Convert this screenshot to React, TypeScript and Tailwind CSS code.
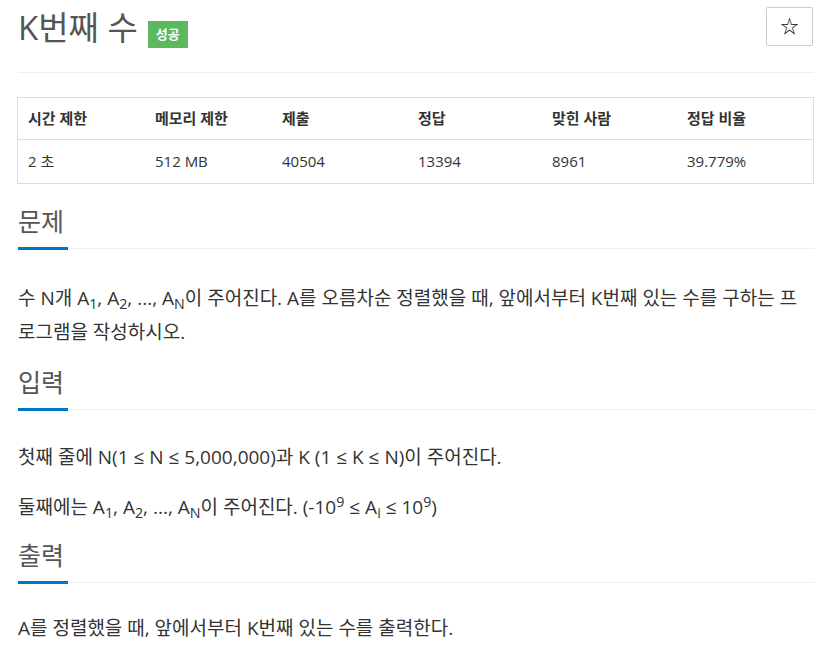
import React from "react";

const font = { fontFamily: '"Open Sans", "Noto Sans CJK KR", sans-serif' };

function Headline({ title, mb }: { title: string; mb: string }) {
  return (
    <div className={`border-b border-dotted border-[#dddddd] ${mb}`}>
      <h2 className="inline-block text-[25px] leading-[36px] text-[#555555] border-b-[3px] border-[#0076c0] mb-[-2px] pb-[8px] pr-[4px] font-normal">
        {title}
      </h2>
    </div>
  );
}

export default function App() {
  const heads = ["시간 제한", "메모리 제한", "제출", "정답", "맞힌 사람", "정답 비율"];
  const vals = ["2 초", "512 MB", "40504", "13394", "8961", "39.779%"];
  const widths = ["w-[127px]", "w-[127px]", "w-[136px]", "w-[134px]", "w-[135px]", "w-[136px]"];
  return (
    <div style={font} className="bg-white min-h-[654px] text-[#333333]">
      <div className="ml-[18px] w-[796px]">
        <div className="flex justify-between items-start border-b border-[#eeeeee] h-[73px]">
          <div className="flex items-center mt-[8px]">
            <h1 className="text-[33px] leading-[40px] text-[#555555] font-normal">K번째 수</h1>
            <span className="ml-[10px] mt-[13px] bg-[#5cb85c] text-white text-[13px] font-bold px-[8px] h-[27px] flex items-center">
              성공
            </span>
          </div>
          <button className="mt-[7px] mr-[1px] w-[47px] h-[39px] border border-[#cccccc] rounded-[2px] bg-white flex items-center justify-center text-[18px] text-black">
            ☆
          </button>
        </div>

        <div className="mt-[24px] ml-[-1px] border border-[#dddddd] w-[797px] text-[15px]">
          <div className="flex border-b border-[#dddddd] h-[42px] items-center font-bold">
            {heads.map((h, i) => (
              <div key={i} className={`${widths[i]} px-[10px]`}>{h}</div>
            ))}
          </div>
          <div className="flex h-[43px] items-center">
            {vals.map((v, i) => (
              <div key={i} className={`${widths[i]} px-[10px]`}>{v}</div>
            ))}
          </div>
        </div>

        <div className="mt-[19px]">
          <Headline title="문제" mb="mb-[32px]" />
          <div className="text-[19px] leading-[34px]">
            <p>
              수 N개 A<sub>1</sub>, A<sub>2</sub>, ..., A<sub>N</sub>이 주어진다. A를 오름차순 정렬했을 때, 앞에서부터 K번째 있는 수를 구하는 프로그램을 작성하시오.
            </p>
          </div>
        </div>

        <div className="mt-[15px]">
          <Headline title="입력" mb="mb-[30px]" />
          <div className="text-[19px] leading-[34px]">
            <p className="mb-[16px]">첫째 줄에 N(1 ≤ N ≤ 5,000,000)과 K (1 ≤ K ≤ N)이 주어진다.</p>
            <p>
              둘째에는 A<sub>1</sub>, A<sub>2</sub>, ..., A<sub>N</sub>이 주어진다. (-10<sup>9</sup> ≤ A<sub>i</sub> ≤ 10<sup>9</sup>)
            </p>
          </div>
        </div>

        <div className="mt-[13px]">
          <Headline title="출력" mb="mb-[28px]" />
          <div className="text-[19px] leading-[34px]">
            <p>A를 정렬했을 때, 앞에서부터 K번째 있는 수를 출력한다.</p>
          </div>
        </div>
      </div>
    </div>
  );
}
